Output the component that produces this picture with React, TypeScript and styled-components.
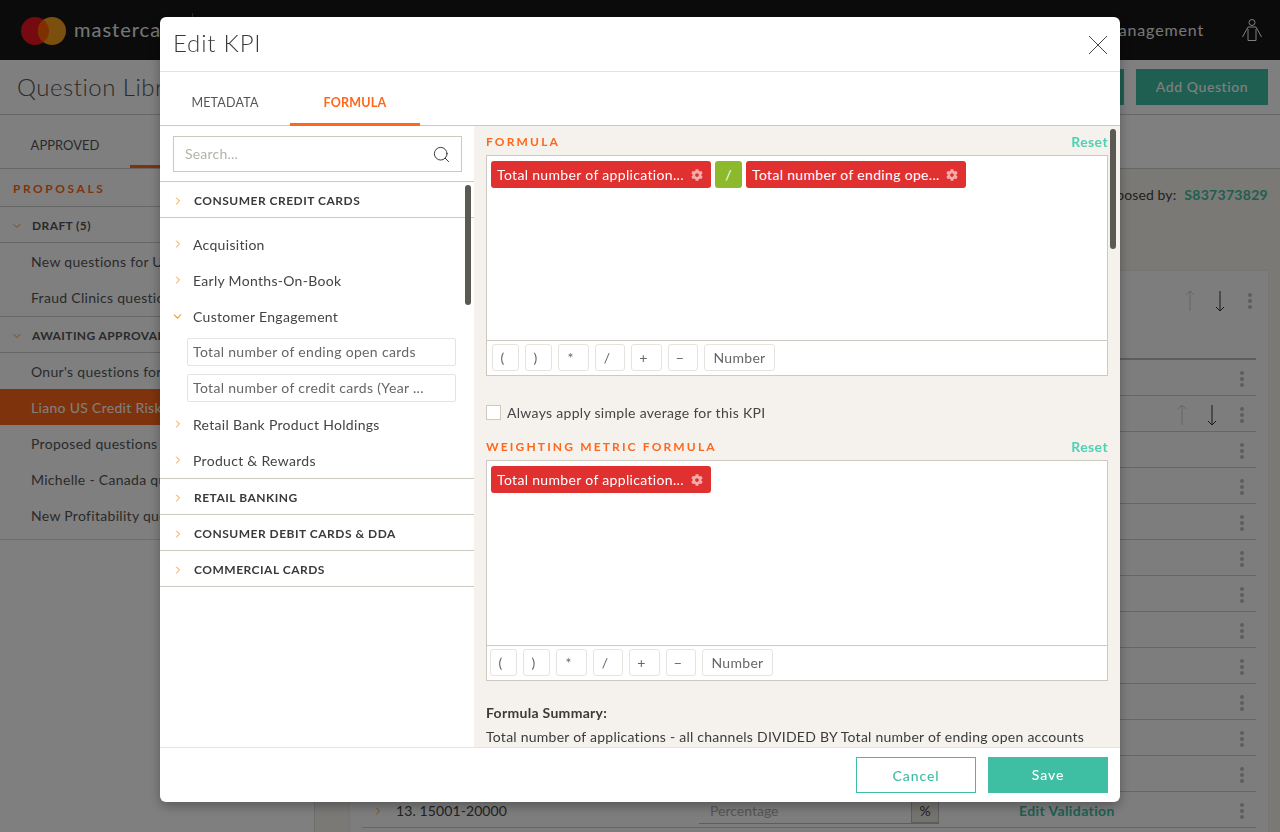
import React from 'react';
import styled, { createGlobalStyle } from 'styled-components';
import { ChevronDown, ChevronRight, Search } from 'lucide-react';
import { FaCog } from 'react-icons/fa';

const GlobalStyle = createGlobalStyle`
  html, body {
    margin: 0;
    padding: 0;
    height: 100%;
    overflow: hidden;
  }
  body {
    font-family: Lato, "Noto Sans", sans-serif;
    color: #333;
  }
  * {
    box-sizing: border-box;
  }
`;

const TEAL = '#3ebfa3';
const ORANGE = '#ff671b';
const AMBER = '#f7981d';

/* page behind the dialog */

const Page = styled.div`
  width: 1280px;
  height: 832px;
  overflow: hidden;
  background: #fff;
  display: flex;
  flex-direction: column;
`;

const TopBar = styled.header`
  height: 60px;
  flex: none;
  background: #161616;
  display: flex;
  align-items: center;
  padding: 0 18px 0 21px;
`;

const LogoMark = styled.svg`
  margin-top: 2px;
  flex: none;
`;

const Brand = styled.div`
  width: 118px;
  margin-left: 8px;
  padding-bottom: 3px;
  font-size: 20px;
  letter-spacing: 1px;
  color: #eee;
`;

const BrandDivider = styled.div`
  width: 1px;
  height: 34px;
  background: #555;
`;

const TopNav = styled.div`
  margin-left: auto;
  display: flex;
  align-items: center;
  gap: 38px;
  font-size: 16px;
  letter-spacing: 0.85px;
  color: #eee;
`;

const NavLabel = styled.span`
  padding-bottom: 2px;
`;

const TitleBar = styled.div`
  height: 55px;
  flex: none;
  display: flex;
  align-items: center;
  padding: 0 12px 0 17px;
  border-bottom: 1px solid #ccc;
`;

const PageTitle = styled.h1`
  margin: 0;
  padding-bottom: 2px;
  font-size: 24px;
  font-weight: 300;
  letter-spacing: 0.5px;
  color: #555;
  flex: 1;
`;

const HeaderButton = styled.div`
  width: 132px;
  height: 36px;
  margin-left: 12px;
  padding-bottom: 2px;
  background: ${TEAL};
  color: #fff;
  font-size: 14px;
  font-weight: 500;
  letter-spacing: 0.6px;
  display: flex;
  align-items: center;
  justify-content: center;
`;

const PageTabs = styled.div`
  height: 54px;
  flex: none;
  display: flex;
  border-bottom: 1px solid #ccc;
`;

const PageTab = styled.div<{ $active?: boolean }>`
  width: 130px;
  display: flex;
  align-items: center;
  justify-content: center;
  padding-top: 6px;
  font-size: 13px;
  color: ${(p) => (p.$active ? ORANGE : '#555')};
  border-bottom: ${(p) => (p.$active ? `3px solid ${ORANGE}` : 'none')};
`;

const PageBody = styled.div`
  flex: 1;
  display: flex;
  min-height: 0;
`;

const Sidebar = styled.aside`
  width: 315px;
  flex: none;
  border-right: 1px solid #ddd;
`;

const SideHeading = styled.div`
  height: 37px;
  padding: 12px 13px 0;
  font-size: 12px;
  font-weight: 700;
  letter-spacing: 2.55px;
  color: ${ORANGE};
`;

const SideGroup = styled.div<{ $gap?: boolean }>`
  height: 37px;
  display: flex;
  align-items: center;
  gap: 9px;
  padding: 2px 0 0 11px;
  margin-top: ${(p) => (p.$gap ? '1px' : '0')};
  font-size: 12px;
  font-weight: 700;
  letter-spacing: 0.4px;
  border-top: 1px solid #ccc;
  border-bottom: 1px solid #ccc;
  color: #555;
`;

const SideItem = styled.div<{ $active?: boolean }>`
  height: 36px;
  display: flex;
  align-items: center;
  padding: 1px 0 0 31px;
  font-size: 14px;
  letter-spacing: 0.3px;
  background: ${(p) => (p.$active ? ORANGE : 'transparent')};
  color: ${(p) => (p.$active ? '#fff' : '#555')};
`;

const SideEnd = styled.div`
  border-top: 1px solid #ddd;
  margin-top: 6px;
`;

const Main = styled.main`
  flex: 1;
  background: #f5f2ed;
  padding: 0 12px 0 35px;
  min-width: 0;
`;

const ProposedBy = styled.div`
  height: 102px;
  display: flex;
  justify-content: flex-end;
  gap: 8px;
  padding-top: 17px;
  font-size: 14px;
  letter-spacing: 0.1px;
  color: #444;
`;

const ProposerId = styled.span`
  color: ${TEAL};
  font-weight: 700;
  letter-spacing: 0.3px;
`;

const Card = styled.section`
  background: #fafafa;
  height: 600px;
  box-shadow: 0 0 2px rgba(0, 0, 0, 0.1);
`;

const CardTools = styled.div`
  height: 60px;
  margin-bottom: 27px;
  padding-right: 4px;
  display: flex;
  justify-content: flex-end;
  align-items: center;
`;

const HeadRule = styled.div`
  height: 2px;
  margin: 0 12px;
  background: #bbb;
`;

const QuestionRow = styled.div`
  height: 36px;
  display: flex;
  align-items: center;
  justify-content: flex-end;
  padding-top: 2px;
  border-bottom: 1px solid #ccc;
  margin: 0 12px;
  font-size: 14px;
  color: #444;
`;

const RowChevron = styled.span`
  margin-left: 10px;
  display: flex;
  color: ${AMBER};
`;

const RowLabel = styled.span`
  margin-right: auto;
  margin-left: 12px;
  letter-spacing: 0.1px;
`;

const PercentField = styled.div`
  width: 240px;
  height: 26px;
  margin-right: 80px;
  display: flex;
  border-bottom: 1px solid #bbb;
  color: #aaa;
  padding-left: 11px;
  align-items: center;
  justify-content: space-between;
`;

const PercentUnit = styled.span`
  width: 28px;
  height: 26px;
  background: #e8e6e0;
  border: 1px solid #bbb;
  color: #444;
  display: flex;
  align-items: center;
  justify-content: center;
`;

const EditLink = styled.span`
  width: 209px;
  color: ${TEAL};
  font-weight: 700;
  letter-spacing: 0.4px;
`;

const ArrowGroup = styled.div`
  display: flex;
  gap: 20px;
  margin-right: 11px;
`;

const DotsSlot = styled.div`
  width: 28px;
  display: flex;
  justify-content: center;
`;

/* dialog */

const Backdrop = styled.div`
  position: fixed;
  inset: 0;
  background: rgba(0, 0, 0, 0.5);
`;

const Dialog = styled.div`
  position: absolute;
  left: 160px;
  top: 17px;
  width: 960px;
  height: 785px;
  background: #fff;
  border-radius: 6px;
  box-shadow: 0 4px 12px rgba(0, 0, 0, 0.3);
  display: flex;
  flex-direction: column;
  overflow: hidden;
`;

const DialogHead = styled.div`
  height: 55px;
  flex: none;
  display: flex;
  align-items: center;
  justify-content: space-between;
  padding: 0 12px 0 13px;
  border-bottom: 1px solid #e2e2e2;
`;

const DialogTitle = styled.h2`
  margin: 0 0 4px;
  font-size: 24px;
  font-weight: 300;
  letter-spacing: 0.8px;
  color: #3a3a3a;
`;

const CloseGlyph = styled.svg`
  margin-top: 2px;
`;

const DialogTabs = styled.div`
  height: 54px;
  flex: none;
  display: flex;
  border-bottom: 1px solid #cdc9c0;
`;

const DialogTab = styled.div<{ $active?: boolean }>`
  width: 130px;
  height: 54px;
  display: flex;
  align-items: center;
  justify-content: center;
  padding-top: 10px;
  font-size: 12.5px;
  font-weight: ${(p) => (p.$active ? 700 : 400)};
  letter-spacing: 0.2px;
  color: ${(p) => (p.$active ? ORANGE : '#555')};
  border-bottom: 3px solid ${(p) => (p.$active ? ORANGE : 'transparent')};
`;

const DialogBody = styled.div`
  flex: 1;
  display: flex;
  min-height: 0;
`;

const Library = styled.div`
  width: 314px;
  flex: none;
  position: relative;
  overflow: hidden;
`;

const SearchBox = styled.div`
  height: 36px;
  margin: 10px 12px 9px 13px;
  border: 1px solid #cdc9c0;
  display: flex;
  align-items: center;
  justify-content: space-between;
  padding: 0 10px 0 11px;
  font-size: 14px;
  color: #b5b2aa;
  letter-spacing: 0.2px;
`;

const SearchHint = styled.span`
  padding-bottom: 2px;
`;

const LibGroup = styled.div`
  height: 36px;
  display: flex;
  align-items: center;
  padding-top: 2px;
  border-top: 1px solid #cdc9c0;
  font-size: 12px;
  font-weight: 700;
  letter-spacing: 0.5px;
  color: #3a3a3a;
`;

const LibGroupEnd = styled.div`
  border-top: 1px solid #cdc9c0;
  height: 9px;
`;

const ChevronSlot = styled.span`
  width: 33px;
  flex: none;
  display: flex;
  justify-content: center;
  margin-left: 1px;
  color: ${AMBER};
`;

const LibItem = styled.div`
  height: 36px;
  display: flex;
  align-items: center;
  font-size: 14px;
  letter-spacing: 0.3px;
  color: #444;
  ${ChevronSlot} {
    margin-right: -1px;
  }
`;

const LibSubList = styled.div`
  display: flex;
  flex-direction: column;
  gap: 8px;
  padding: 4px 18px 4px 27px;
`;

const LibSub = styled.div`
  height: 28px;
  padding: 0 5px 2px;
  display: flex;
  align-items: center;
  border: 1px solid #e6e4de;
  border-radius: 2px;
  font-size: 14px;
  letter-spacing: 0.33px;
  color: #666;
  white-space: nowrap;
`;

const ScrollThumb = styled.div<{ $top: number; $right: number }>`
  position: absolute;
  top: ${(p) => p.$top}px;
  right: ${(p) => p.$right}px;
  width: 6px;
  height: 120px;
  border-radius: 3px;
  background: #5b5953;
`;

const Editor = styled.div`
  flex: 1;
  position: relative;
  background: #f5f2ed;
  padding: 0 12px;
  overflow: hidden;
`;

const SectionHead = styled.div<{ $top: number }>`
  display: flex;
  justify-content: space-between;
  align-items: flex-start;
  height: 20px;
  padding-top: 1px;
  margin-top: ${(p) => p.$top}px;
  margin-bottom: 1px;
`;

const SectionLabel = styled.span`
  font-size: 12px;
  font-weight: 700;
  letter-spacing: 2.15px;
  color: ${ORANGE};
  line-height: 14px;
`;

const ResetLink = styled.span`
  font-size: 14px;
  font-weight: 700;
  letter-spacing: 0.4px;
  color: #4fd1b3;
  line-height: 14px;
`;

const FormulaBox = styled.div`
  height: 221px;
  background: #fff;
  border: 1px solid #cdc9c0;
  display: flex;
  flex-direction: column;
`;

const ChipArea = styled.div`
  flex: 1;
  display: flex;
  align-items: flex-start;
  gap: 4px;
  padding: 5px 4px;
`;

const Chip = styled.div<{ $op?: boolean }>`
  height: 27px;
  border-radius: 3px;
  display: flex;
  align-items: center;
  justify-content: ${(p) => (p.$op ? 'center' : 'space-between')};
  width: ${(p) => (p.$op ? '27px' : '220px')};
  padding: ${(p) => (p.$op ? '0' : '0 8px 0 6px')};
  background: ${(p) => (p.$op ? '#8cba2c' : '#e03030')};
  color: #fff;
  font-size: 14px;
  letter-spacing: 0.33px;
  white-space: nowrap;
  svg {
    color: rgba(255, 255, 255, 0.6);
  }
`;

const Toolbar = styled.div<{ $inset: number }>`
  height: 35px;
  flex: none;
  border-top: 1px solid #cdc9c0;
  display: flex;
  align-items: flex-start;
  gap: 6px;
  padding: 3px 0 0 ${(p) => p.$inset}px;
`;

const OpButton = styled.div<{ $width: number; $glyph?: boolean }>`
  width: ${(p) => p.$width}px;
  height: 27px;
  padding-right: ${(p) => (p.$glyph ? '6px' : '0')};
  border: 1px solid #e6e4de;
  border-radius: 3px;
  display: flex;
  align-items: center;
  justify-content: center;
  font-size: 14px;
  letter-spacing: 0.3px;
  color: #666;
`;

const CheckRow = styled.label`
  display: flex;
  align-items: center;
  gap: 6px;
  margin-top: 29px;
  height: 15px;
  font-size: 14px;
  letter-spacing: 0.3px;
  color: #444;
`;

const CheckBox = styled.span`
  width: 15px;
  height: 15px;
  background: #fff;
  border: 1px solid #cdc9c0;
`;

const Summary = styled.div`
  margin-top: 20px;
  font-size: 14px;
  letter-spacing: 0.25px;
  line-height: 24px;
  color: #3a3a3a;
  white-space: nowrap;
`;

const SummaryTitle = styled.div`
  font-weight: 700;
  letter-spacing: 0.3px;
`;

const DialogFoot = styled.div`
  height: 55px;
  flex: none;
  display: flex;
  align-items: center;
  justify-content: flex-end;
  gap: 12px;
  padding: 0 12px 0 0;
  border-top: 1px solid #e6e4de;
`;

const FootButton = styled.div<{ $filled?: boolean }>`
  width: 120px;
  height: 36px;
  padding-bottom: ${(p) => (p.$filled ? '2px' : '0')};
  display: flex;
  align-items: center;
  justify-content: center;
  font-size: 14px;
  font-weight: 500;
  letter-spacing: 0.9px;
  border: 1px solid ${TEAL};
  background: ${(p) => (p.$filled ? TEAL : '#fff')};
  color: ${(p) => (p.$filled ? '#fff' : TEAL)};
`;

const MastercardLogo = () => (
  <LogoMark width="45" height="28" viewBox="0 0 45 28">
    <circle cx="14" cy="14" r="14" fill="#ea1420" />
    <circle cx="31" cy="14" r="14" fill="#f79e1b" />
    <path d="M22.5 2.9a14 14 0 0 1 0 22.2a14 14 0 0 1 0-22.2z" fill="#ff5f00" />
  </LogoMark>
);

const PersonIcon = () => (
  <svg width="20" height="22" viewBox="0 0 20 22" fill="none" stroke="#fff" strokeWidth="1">
    <circle cx="10" cy="3.5" r="3" />
    <path d="M6 8h8l5.5 10M6 8L.5 18M6 10v11.5h8V10" />
  </svg>
);

const CloseIcon = () => (
  <CloseGlyph width="20" height="20" viewBox="0 0 20 20" stroke="#444" strokeWidth="1" fill="none">
    <path d="M1 1l18 18M19 1L1 19" />
  </CloseGlyph>
);

const ArrowIcon = ({ down }: { down?: boolean }) => (
  <svg
    width="10"
    height="22"
    viewBox="0 0 10 22"
    fill="none"
    stroke={down ? '#333' : '#ccc'}
    strokeWidth="1"
  >
    {down ? <path d="M5 1v20M1 17l4 4 4-4" /> : <path d="M5 21V1M1 5l4-4 4 4" />}
  </svg>
);

const DotsIcon = () => (
  <svg width="4" height="16" viewBox="0 0 4 16" fill="#bbb">
    <circle cx="2" cy="2" r="2" />
    <circle cx="2" cy="8" r="2" />
    <circle cx="2" cy="14" r="2" />
  </svg>
);

const Arrows = () => (
  <ArrowGroup>
    <ArrowIcon />
    <ArrowIcon down />
  </ArrowGroup>
);

const Dots = () => (
  <DotsSlot>
    <DotsIcon />
  </DotsSlot>
);

const Closed = () => (
  <ChevronSlot>
    <ChevronRight size={12} strokeWidth={2} />
  </ChevronSlot>
);

const Open = () => (
  <ChevronSlot>
    <ChevronDown size={13} strokeWidth={2} />
  </ChevronSlot>
);

const FormulaChip = ({ label }: { label: string }) => (
  <Chip>
    {label}
    <FaCog size={12} />
  </Chip>
);

const OPERATORS: [string, number][] = [
  ['(', 27],
  [')', 27],
  ['*', 31],
  ['/', 30],
  ['+', 31],
  ['−', 30],
  ['Number', 71],
];

const OperatorBar = ({ inset }: { inset: number }) => (
  <Toolbar $inset={inset}>
    {OPERATORS.map(([label, width]) => (
      <OpButton key={label} $width={width} $glyph={label !== 'Number'}>
        {label}
      </OpButton>
    ))}
  </Toolbar>
);

const App = () => {
  const emptyRows = Array.from({ length: 12 }, (_, i) => i);

  return (
    <>
      <GlobalStyle />
      <Page>
        <TopBar>
          <MastercardLogo />
          <Brand>mastercard</Brand>
          <BrandDivider />
          <TopNav>
            <NavLabel>Management</NavLabel>
            <PersonIcon />
          </TopNav>
        </TopBar>
        <TitleBar>
          <PageTitle>Question Library</PageTitle>
          <HeaderButton>Add Question</HeaderButton>
          <HeaderButton>Add Question</HeaderButton>
        </TitleBar>
        <PageTabs>
          <PageTab>APPROVED</PageTab>
          <PageTab $active>PROPOSED</PageTab>
        </PageTabs>
        <PageBody>
          <Sidebar>
            <SideHeading>PROPOSALS</SideHeading>
            <SideGroup>
              <ChevronDown size={12} color={AMBER} />
              DRAFT (5)
            </SideGroup>
            <SideItem>New questions for US</SideItem>
            <SideItem>Fraud Clinics questions</SideItem>
            <SideGroup $gap>
              <ChevronDown size={12} color={AMBER} />
              AWAITING APPROVAL
            </SideGroup>
            <SideItem>Onur's questions for</SideItem>
            <SideItem $active>Liano US Credit Risk</SideItem>
            <SideItem>Proposed questions</SideItem>
            <SideItem>Michelle - Canada questions</SideItem>
            <SideItem>New Profitability questions</SideItem>
            <SideEnd />
          </Sidebar>
          <Main>
            <ProposedBy>
              Proposed by:
              <ProposerId>S837373829</ProposerId>
            </ProposedBy>
            <Card>
              <CardTools>
                <Arrows />
                <Dots />
              </CardTools>
              <HeadRule />
              {emptyRows.map((i) => (
                <QuestionRow key={i}>
                  {i === 1 && <Arrows />}
                  <Dots />
                </QuestionRow>
              ))}
              <QuestionRow>
                <RowChevron>
                  <ChevronRight size={12} strokeWidth={2} />
                </RowChevron>
                <RowLabel>13. 15001-20000</RowLabel>
                <PercentField>
                  Percentage
                  <PercentUnit>%</PercentUnit>
                </PercentField>
                <EditLink>Edit Validation</EditLink>
                <Dots />
              </QuestionRow>
            </Card>
          </Main>
        </PageBody>
      </Page>
      <Backdrop>
        <Dialog>
          <DialogHead>
            <DialogTitle>Edit KPI</DialogTitle>
            <CloseIcon />
          </DialogHead>
          <DialogTabs>
            <DialogTab>METADATA</DialogTab>
            <DialogTab $active>FORMULA</DialogTab>
          </DialogTabs>
          <DialogBody>
            <Library>
              <SearchBox>
                <SearchHint>Search...</SearchHint>
                <Search size={19} strokeWidth={1.2} color="#333" />
              </SearchBox>
              <LibGroup>
                <Closed />
                CONSUMER CREDIT CARDS
              </LibGroup>
              <LibGroupEnd />
              <LibItem>
                <Closed />
                Acquisition
              </LibItem>
              <LibItem>
                <Closed />
                Early Months-On-Book
              </LibItem>
              <LibItem>
                <Open />
                Customer Engagement
              </LibItem>
              <LibSubList>
                <LibSub>Total number of ending open cards</LibSub>
                <LibSub>Total number of credit cards (Year ...</LibSub>
              </LibSubList>
              <LibItem>
                <Closed />
                Retail Bank Product Holdings
              </LibItem>
              <LibItem>
                <Closed />
                Product &amp; Rewards
              </LibItem>
              <LibGroup>
                <Closed />
                RETAIL BANKING
              </LibGroup>
              <LibGroup>
                <Closed />
                CONSUMER DEBIT CARDS &amp; DDA
              </LibGroup>
              <LibGroup>
                <Closed />
                COMMERCIAL CARDS
              </LibGroup>
              <LibGroupEnd />
              <ScrollThumb $top={59} $right={3} />
            </Library>
            <Editor>
              <SectionHead $top={8}>
                <SectionLabel>FORMULA</SectionLabel>
                <ResetLink>Reset</ResetLink>
              </SectionHead>
              <FormulaBox>
                <ChipArea>
                  <FormulaChip label="Total number of application..." />
                  <Chip $op>/</Chip>
                  <FormulaChip label="Total number of ending ope..." />
                </ChipArea>
                <OperatorBar inset={5} />
              </FormulaBox>
              <CheckRow>
                <CheckBox />
                Always apply simple average for this KPI
              </CheckRow>
              <SectionHead $top={19}>
                <SectionLabel>WEIGHTING METRIC FORMULA</SectionLabel>
                <ResetLink>Reset</ResetLink>
              </SectionHead>
              <FormulaBox>
                <ChipArea>
                  <FormulaChip label="Total number of application..." />
                </ChipArea>
                <OperatorBar inset={3} />
              </FormulaBox>
              <Summary>
                <SummaryTitle>Formula Summary:</SummaryTitle>
                Total number of applications - all channels DIVIDED BY Total number of ending open accounts
              </Summary>
              <ScrollThumb $top={3} $right={4} />
            </Editor>
          </DialogBody>
          <DialogFoot>
            <FootButton>Cancel</FootButton>
            <FootButton $filled>Save</FootButton>
          </DialogFoot>
        </Dialog>
      </Backdrop>
    </>
  );
};

export default App;
